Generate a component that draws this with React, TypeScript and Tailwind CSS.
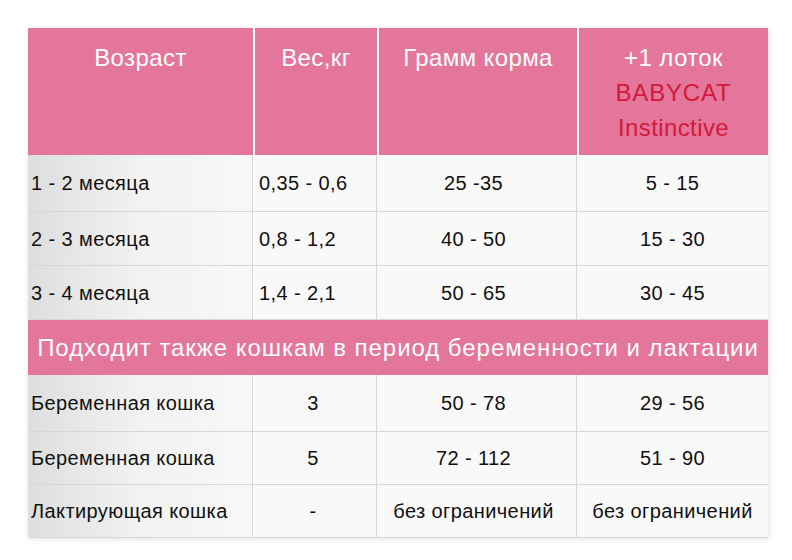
const rows1 = [
  ['1 - 2 месяца', '0,35 - 0,6', '25 -35', '5 - 15'],
  ['2 - 3 месяца', '0,8 - 1,2', '40 - 50', '15 - 30'],
  ['3 - 4 месяца', '1,4 - 2,1', '50 - 65', '30 - 45'],
];

const rows2 = [
  ['Беременная кошка', '3', '50 - 78', '29 - 56'],
  ['Беременная кошка', '5', '72 - 112', '51 - 90'],
  ['Лактирующая кошка', '-', 'без ограничений', 'без ограничений'],
];

const cols = 'grid grid-cols-[225px_124px_200px_191px]';

function BodyRow({ cells, h, centerWeight }: { cells: string[]; h: string; centerWeight: boolean }) {
  return (
    <div className={`${cols} ${h} border-b border-[#d6d6d6]`}>
      <div className="flex items-center pl-[3px] bg-gradient-to-r from-[#dedede] via-[#f2f2f2] to-[#f8f8f8] border-r border-[#d6d6d6]">
        {cells[0]}
      </div>
      <div
        className={`flex items-center bg-[#f9f9f9] border-r border-[#d6d6d6] ${
          centerWeight ? 'justify-center pr-[3px]' : 'pl-[6px]'
        }`}
      >
        {cells[1]}
      </div>
      <div className="flex items-center justify-center bg-[#f9f9f9] border-r border-[#d6d6d6] pr-[6px]">{cells[2]}</div>
      <div className="flex items-center justify-center bg-[#f9f9f9]">{cells[3]}</div>
    </div>
  );
}

export default function App() {
  return (
    <div className="w-[792px] h-[560px] bg-white pt-[28px] pl-[28px] font-['Liberation_Sans',Arial,sans-serif]">
      <div className="w-[740px] shadow-[1px_1px_6px_rgba(0,0,0,0.12)] text-[20px] text-[#111] tracking-[0.4px]">
        <div className={`${cols} h-[127px] text-white text-[24px] leading-[35px] text-center`}>
          <div className="bg-[#e4759b] pt-[12px]">Возраст</div>
          <div className="bg-[#e4759b] pt-[12px] border-l-2 border-white">Вес,кг</div>
          <div className="bg-[#e4759b] pt-[12px] border-l-2 border-white">Грамм корма</div>
          <div className="bg-[#e4759b] pt-[12px] border-l-2 border-white flex flex-col">
            <span>+1 лоток</span>
            <span className="text-[#d2193b] tracking-[0.8px]">BABYCAT</span>
            <span className="text-[#d2193b]">Instinctive</span>
          </div>
        </div>
        <BodyRow cells={rows1[0]} h="h-[57px]" centerWeight={false} />
        <BodyRow cells={rows1[1]} h="h-[54px]" centerWeight={false} />
        <BodyRow cells={rows1[2]} h="h-[54px]" centerWeight={false} />
        <div className="h-[55px] bg-[#e4759b] text-white text-[24px] tracking-[0.95px] flex items-center justify-center">
          Подходит также кошкам в период беременности и лактации
        </div>
        <BodyRow cells={rows2[0]} h="h-[57px]" centerWeight />
        <BodyRow cells={rows2[1]} h="h-[53px]" centerWeight />
        <BodyRow cells={rows2[2]} h="h-[53px]" centerWeight />
      </div>
    </div>
  );
}
